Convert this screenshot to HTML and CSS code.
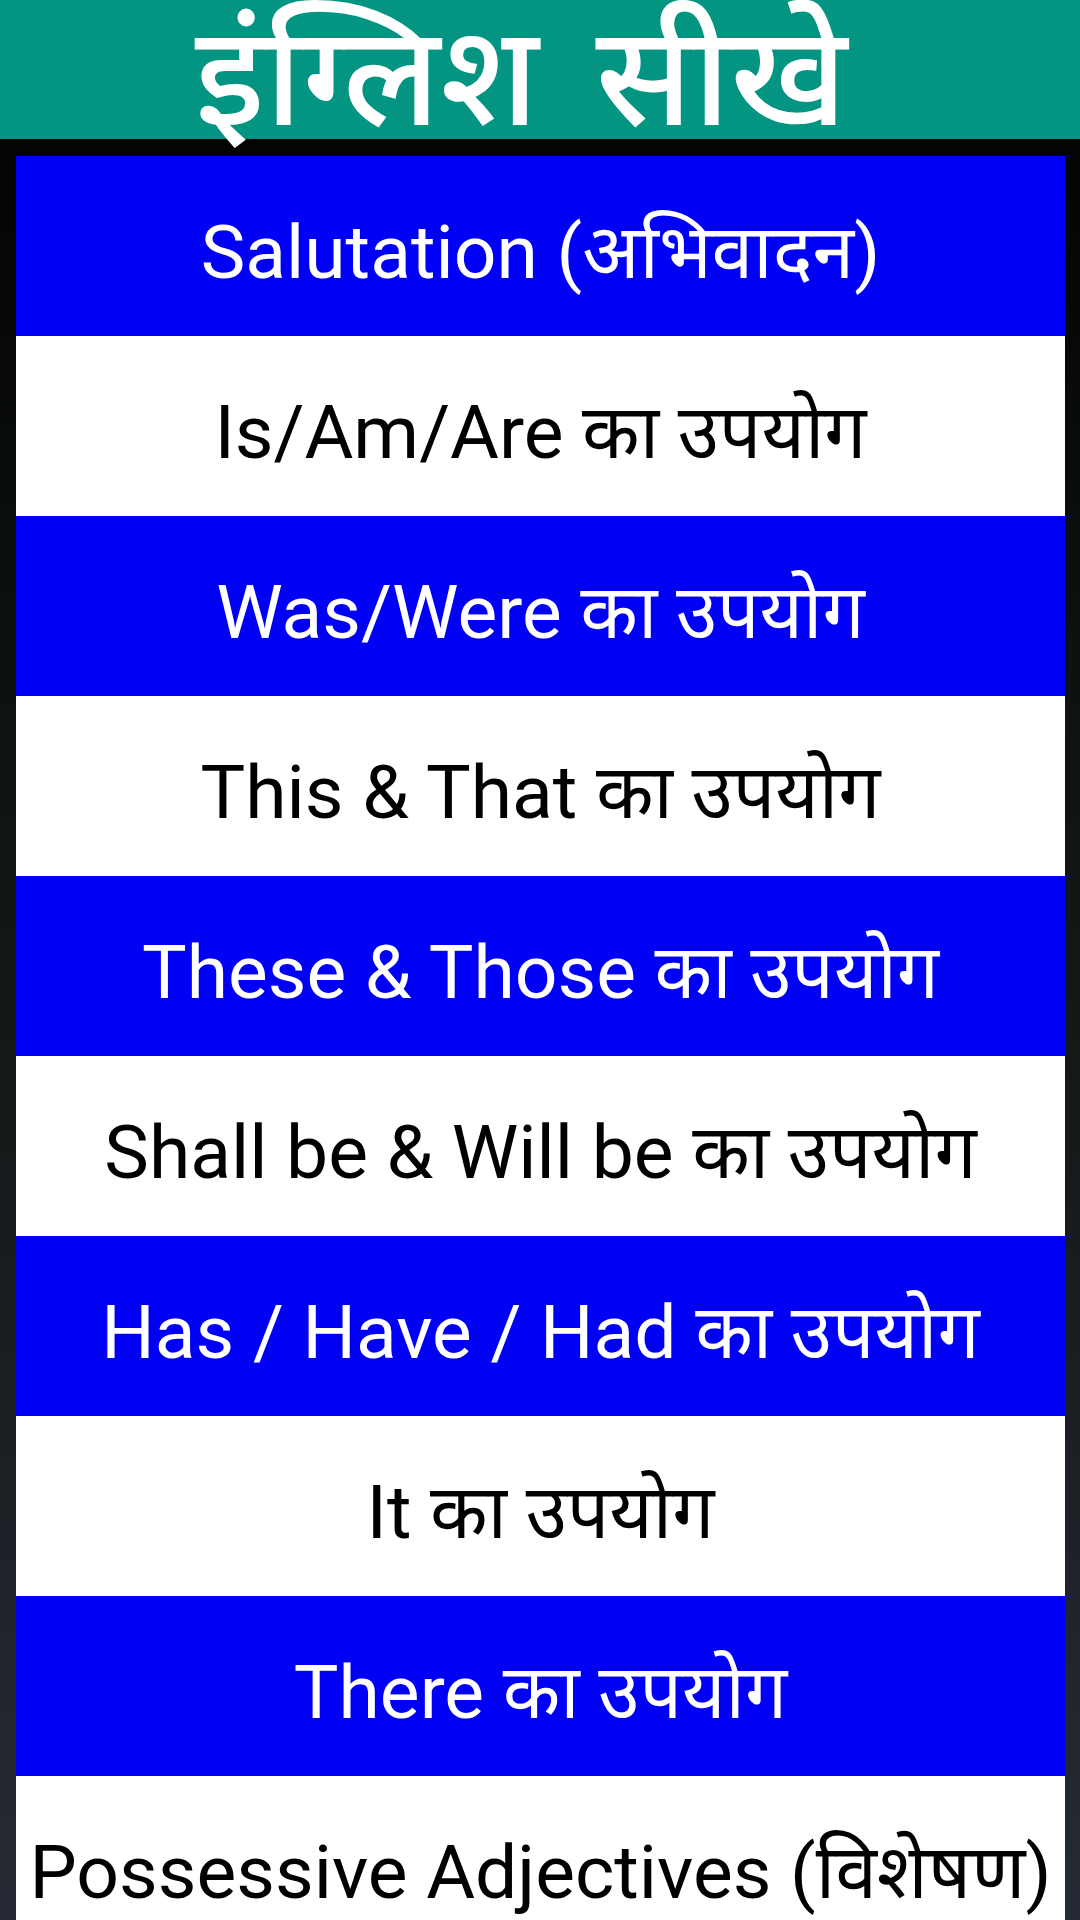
FILE: index.html
```html
<!DOCTYPE html>
<html lang="hi">
<head>
    <meta charset="UTF-8">
    <meta name="viewport" content="width=device-width, initial-scale=1.0">
    <title>इंग्लिश सीखे</title>
    <link rel="stylesheet" href="styles.css">
</head>
<body>
    <div class="header">
        <div class="logo">इंग्लिश सीखे</div>
    </div>

    <div class="lessons">
        <div class="lesson blue">Salutation (अभिवादन)</div>
        <div class="lesson white">Is/Am/Are का उपयोग</div>
        <div class="lesson blue">Was/Were का उपयोग</div>
        <div class="lesson white">This &amp; That का उपयोग</div>
        <div class="lesson blue">These &amp; Those का उपयोग</div>
        <div class="lesson white">Shall be &amp; Will be का उपयोग</div>
        <div class="lesson blue">Has / Have / Had का उपयोग</div>
        <div class="lesson white">It का उपयोग</div>
        <div class="lesson blue">There का उपयोग</div>
        <div class="lesson white">Possessive Adjectives (विशेषण)</div>
    </div>
</body>
</html>
```

FILE: styles.css
```css
* {
    margin: 0;
    padding: 0;
    box-sizing: border-box;
}

body {
    width: 1080px;
    height: 1920px;
    overflow: hidden;
    font-family: Roboto, "Noto Sans", sans-serif;
    background: linear-gradient(180deg, #000 0%, #0c0f0f 30%, #161a1b 60%, #262a34 100%);
}

.header {
    height: 139px;
    background: #039582;
    display: flex;
    justify-content: center;
}

/* title sits above the list so the long glyph tails can hang over it */
.logo {
    font-size: 140px;
    font-weight: 500;
    color: #fff;
    line-height: 1.1;
    margin-top: 0;
    margin-left: -38px;
    word-spacing: 22px;
    white-space: nowrap;
    position: relative;
    z-index: 1;
}

.lessons {
    padding: 17px 15px 0 16px;
}

.lesson {
    height: 180px;
    display: flex;
    align-items: center;
    justify-content: center;
    font-size: 75px;
    white-space: nowrap;
    padding-top: 6px;
}

.lesson.blue {
    background: #0000f5;
    color: #fff;
}

.lesson.white {
    background: #fff;
    color: #000;
}
```
